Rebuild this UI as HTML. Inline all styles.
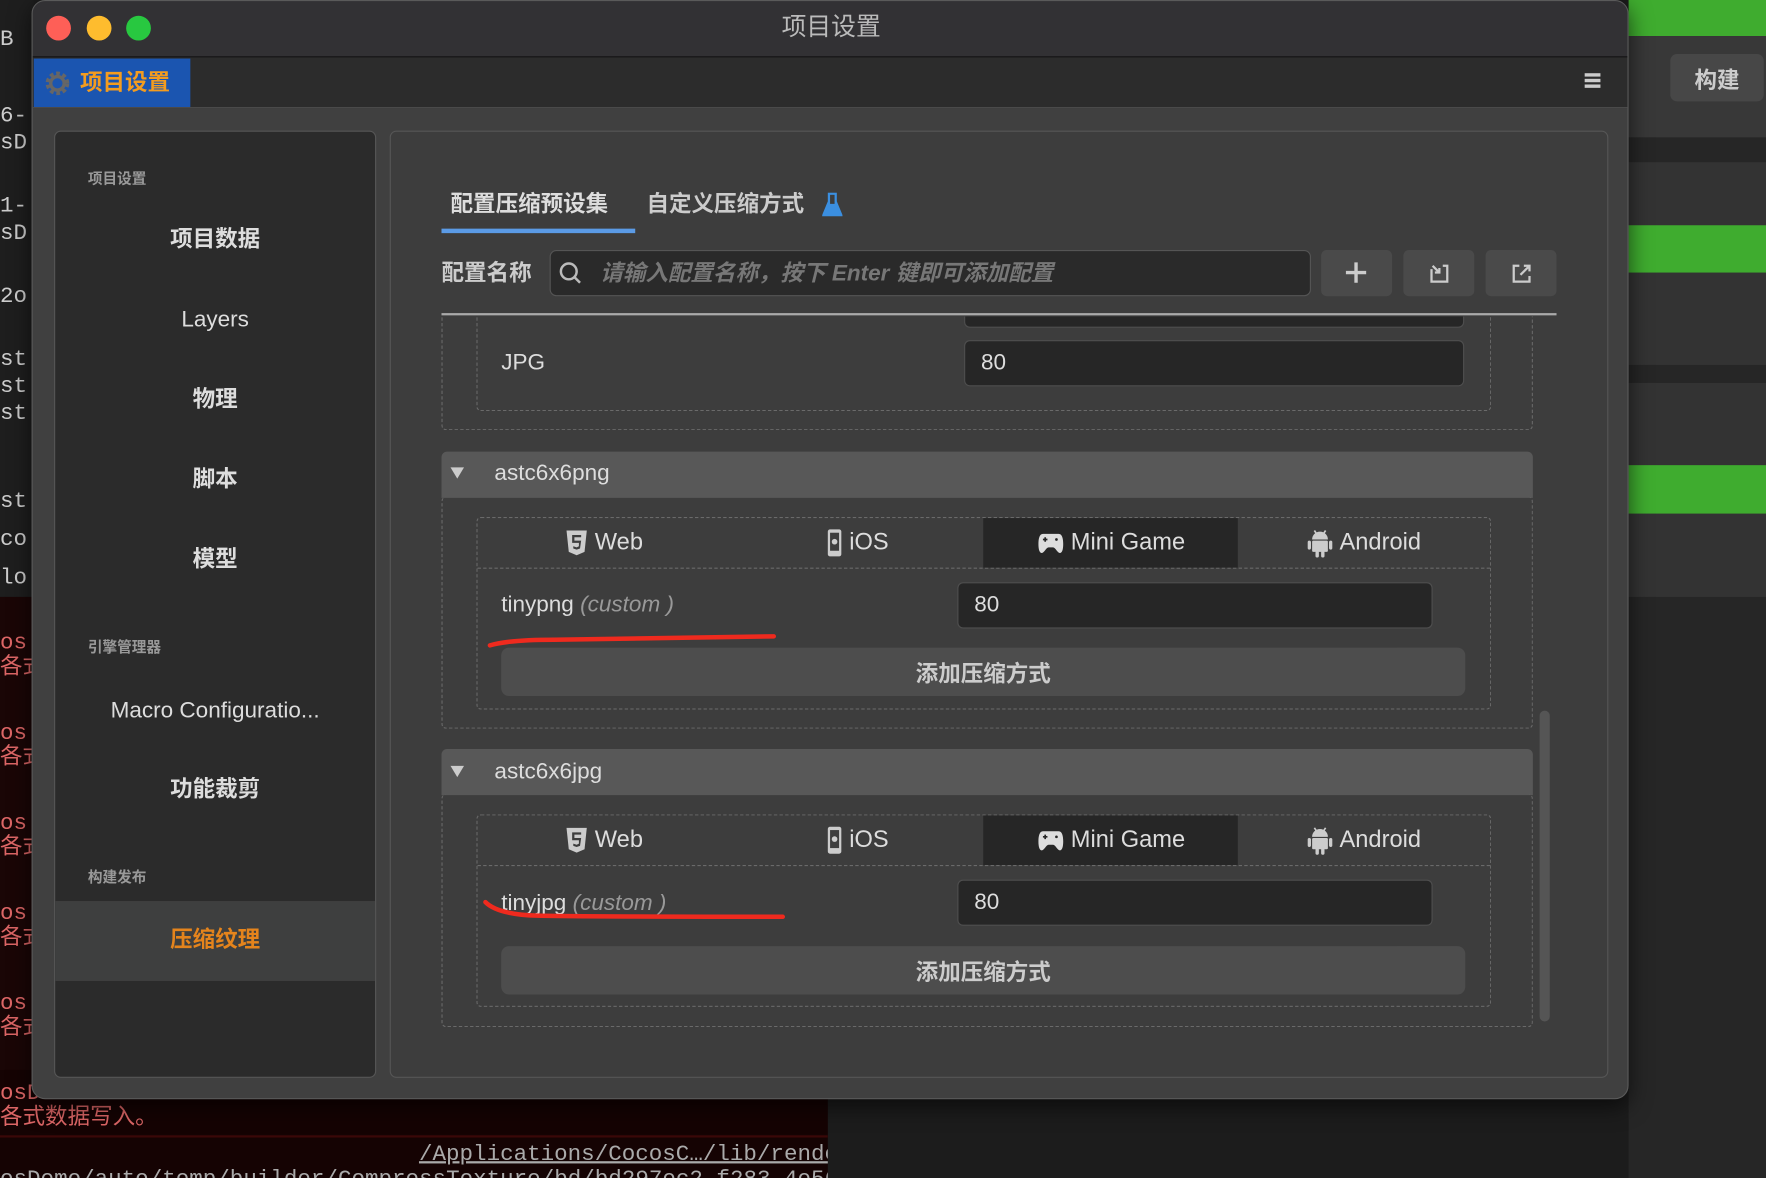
<!DOCTYPE html>
<html><head><meta charset="utf-8"><style>
*{box-sizing:border-box;margin:0;padding:0}
html,body{width:1766px;height:1178px;overflow:hidden;background:#1c1c1c}
#s{position:absolute;left:0;top:0;width:1568px;height:1046px;transform:scale(1.12628);transform-origin:0 0;font-family:"Liberation Sans","Noto Sans CJK SC",sans-serif;}
.a{position:absolute}
.t{position:absolute;white-space:nowrap;line-height:1}
.cn{font-weight:bold}
.term{font-family:"Liberation Mono","Noto Sans CJK SC",monospace;font-size:20px;color:#ccc}
.dash{position:absolute;border:1.5px dashed #6a6a6a;border-radius:4px}
.inp{position:absolute;background:#262626;border:1px solid #4e4e4e;border-radius:5px;color:#ddd;font-size:20px;padding-left:14px;display:flex;align-items:center}
.btn{position:absolute;background:#4d4d4d;border-radius:7px;color:#ccc;font-size:20px;font-weight:bold;display:flex;align-items:center;justify-content:center}
.tb{position:absolute;height:45px;display:flex;align-items:center;justify-content:center;font-size:21px;color:#ddd;gap:6px}
</style></head><body><div id="s">
<div class="a" style="left:0;top:0;width:30px;height:530px;background:#1e1e1e"></div>
<div class="a" style="left:0;top:530px;width:30px;height:440px;background:#1a0606"></div>
<div class="t term" style="left:0;top:26px">B</div>
<div class="t term" style="left:0;top:94px">6-</div><div class="t term" style="left:0;top:118px">sD</div>
<div class="t term" style="left:0;top:174px">1-</div><div class="t term" style="left:0;top:198px">sD</div>
<div class="t term" style="left:0;top:254px">2o</div>
<div class="t term" style="left:0;top:310px">st</div><div class="t term" style="left:0;top:334px">st</div><div class="t term" style="left:0;top:358px">st</div>
<div class="t term" style="left:0;top:436px">st</div><div class="t term" style="left:0;top:470px">co</div><div class="t term" style="left:0;top:504px">lo</div>
<div class="t term" style="left:0;top:562px;color:#d66">os</div><div class="t term" style="left:0;top:584px;color:#d66">各式</div>
<div class="t term" style="left:0;top:642px;color:#d66">os</div><div class="t term" style="left:0;top:664px;color:#d66">各式</div>
<div class="t term" style="left:0;top:722px;color:#d66">os</div><div class="t term" style="left:0;top:744px;color:#d66">各式</div>
<div class="t term" style="left:0;top:802px;color:#d66">os</div><div class="t term" style="left:0;top:824px;color:#d66">各式</div>
<div class="t term" style="left:0;top:882px;color:#d66">os</div><div class="t term" style="left:0;top:904px;color:#d66">各式</div>
<div class="a" style="left:0;top:950px;width:735px;height:96px;background:#150303;overflow:hidden">
<div class="t term" style="left:0;top:12px;color:#d66">osD</div>
<div class="t term" style="left:0;top:34px;color:#d66">各式数据写入。</div>
<div class="a" style="left:0;top:58px;width:735px;height:2px;background:#3a0808"></div>
<div class="t term" style="left:372px;top:66px;color:#aaa;text-decoration:underline">/Applications/CocosC…/lib/rende</div>
<div class="t term" style="left:0;top:88px;color:#aaa">osDemo/auto/temp/builder/CompressTexture/bd/bd297ec2-f283-4e56</div>
</div>
<div class="a" style="left:1446px;top:0;width:122px;height:1046px;background:#262626"></div>
<div class="a" style="left:1446px;top:0;width:122px;height:32px;background:#3fac2f"></div>
<div class="a" style="left:1446px;top:32px;width:122px;height:90px;background:#383838"></div>
<div class="a" style="left:1483px;top:48px;width:83px;height:42px;background:#474747;border-radius:6px;color:#ccc;font-size:20px;font-weight:bold;display:flex;align-items:center;justify-content:center">构建</div>
<div class="a" style="left:1446px;top:122px;width:122px;height:22px;background:#262626"></div>
<div class="a" style="left:1446px;top:144px;width:122px;height:180px;background:#333"></div>
<div class="a" style="left:1446px;top:200px;width:122px;height:42px;background:#3fac2f"></div>
<div class="a" style="left:1446px;top:340px;width:122px;height:190px;background:#333"></div>
<div class="a" style="left:1446px;top:413px;width:122px;height:43px;background:#3fac2f"></div>
<div class="a" style="left:28px;top:0;width:1418px;height:976px;background:#404040;border-radius:12px;border:1px solid #5a5a5a;overflow:hidden;box-shadow:0 6px 20px rgba(0,0,0,.6)">
 <div class="a" style="left:0;top:0;width:1418px;height:50px;background:#323134;border-bottom:1px solid #111"></div>
 <div class="a" style="left:12px;top:13px;width:22px;height:22px;border-radius:50%;background:#fe5f57"></div>
 <div class="a" style="left:48px;top:13px;width:22px;height:22px;border-radius:50%;background:#febc2e"></div>
 <div class="a" style="left:83px;top:13px;width:22px;height:22px;border-radius:50%;background:#28c840"></div>
 <div class="t" style="left:0;width:1418px;text-align:center;top:12px;font-size:22px;color:#bbb">项目设置</div>
 <div class="a" style="left:0;top:50px;width:1418px;height:45px;background:#2c2c2c;border-bottom:1px solid #4a4a4a"></div>
 <div class="a" style="left:1px;top:51px;width:139px;height:43px;background:#1b55b0"></div>
 <svg class="a" style="left:10px;top:61px" width="24" height="24" viewBox="0 0 24 24"><circle cx="12" cy="12" r="8" fill="none" stroke="#666" stroke-width="5" stroke-dasharray="3 2.2"/><circle cx="12" cy="12" r="6" fill="none" stroke="#666" stroke-width="3"/></svg>
 <div class="t cn" style="left:42px;top:63px;font-size:20px;color:#f39c1f">项目设置</div>
 <div class="a" style="left:1378px;top:64px;width:14px;height:3px;background:#ccc;box-shadow:0 5px 0 #ccc,0 10px 0 #ccc"></div>
 <div class="a" style="left:19px;top:115px;width:286px;height:841px;background:#2b2b2b;border:1.5px solid #565656;border-radius:6px;overflow:hidden">
  <div class="t cn" style="left:29px;top:35px;font-size:13px;color:#999">项目设置</div>
  <div class="t cn" style="left:0;width:284px;text-align:center;top:86px;font-size:20px;color:#ddd">项目数据</div>
  <div class="t" style="left:0;width:284px;text-align:center;top:157px;font-size:20px;color:#ddd">Layers</div>
  <div class="t cn" style="left:0;width:284px;text-align:center;top:228px;font-size:20px;color:#ddd">物理</div>
  <div class="t cn" style="left:0;width:284px;text-align:center;top:299px;font-size:20px;color:#ddd">脚本</div>
  <div class="t cn" style="left:0;width:284px;text-align:center;top:370px;font-size:20px;color:#ddd">模型</div>
  <div class="t cn" style="left:29px;top:451px;font-size:13px;color:#999">引擎管理器</div>
  <div class="t" style="left:0;width:284px;text-align:center;top:504px;font-size:20px;color:#ddd">Macro Configuratio...</div>
  <div class="t cn" style="left:0;width:284px;text-align:center;top:574px;font-size:20px;color:#ddd">功能裁剪</div>
  <div class="t cn" style="left:29px;top:655px;font-size:13px;color:#999">构建发布</div>
  <div class="a" style="left:0;top:683px;width:284px;height:71px;background:#3e3f3f"></div>
  <div class="t cn" style="left:0;width:284px;text-align:center;top:708px;font-size:20px;color:#e5841c">压缩纹理</div>
 </div>
 <div class="a" style="left:317px;top:115px;width:1082px;height:841px;background:#3d3d3d;border:1.5px solid #565656;border-radius:6px;overflow:hidden">
  <div class="t cn" style="left:53px;top:55px;font-size:20px;color:#ddd">配置压缩预设集</div>
  <div class="a" style="left:45px;top:86px;width:172px;height:4px;background:#5b9be6"></div>
  <div class="t cn" style="left:227px;top:55px;font-size:20px;color:#ccc">自定义压缩方式</div>
  <svg class="a" style="left:383px;top:54px" width="18" height="22" viewBox="0 0 18 22"><path d="M5 1h8M6 1v7L1 20h16L12 8V1" fill="#3b8fe0" stroke="#3b8fe0" stroke-width="2"/><rect x="7" y="2" width="4" height="8" fill="#3d3d3d"/></svg>
  <div class="t cn" style="left:45px;top:116px;font-size:20px;color:#ccc">配置名称</div>
  <div class="a" style="left:141px;top:105px;width:676px;height:41px;background:#2a2a2a;border:1px solid #555;border-radius:6px"></div>
  <svg class="a" style="left:148px;top:114px" width="24" height="24" viewBox="0 0 24 24"><circle cx="10" cy="10" r="7" fill="none" stroke="#bbb" stroke-width="2.2"/><path d="M15 15l5 5" stroke="#bbb" stroke-width="2.2"/></svg>
  <div class="t" style="left:186px;top:116px;font-size:20px;color:#777;font-style:italic;font-weight:bold">请输入配置名称，按下 Enter 键即可添加配置</div>
  <div class="a" style="left:826px;top:105px;width:63px;height:41px;background:#4a4a4a;border-radius:5px"></div>
  <svg class="a" style="left:846px;top:114px" width="22" height="22" viewBox="0 0 22 22"><path d="M11 2v18M2 11h18" stroke="#ccc" stroke-width="3"/></svg>
  <div class="a" style="left:899px;top:105px;width:63px;height:41px;background:#4a4a4a;border-radius:5px"></div>
  <svg class="a" style="left:920px;top:115px" width="22" height="22" viewBox="0 0 22 22"><path d="M4 7v11h14V4h-4M5 4l6 6M11 6v4H7" fill="none" stroke="#ccc" stroke-width="2"/></svg>
  <div class="a" style="left:972px;top:105px;width:63px;height:41px;background:#4a4a4a;border-radius:5px"></div>
  <svg class="a" style="left:993px;top:115px" width="22" height="22" viewBox="0 0 22 22"><path d="M9 4H4v14h14v-5M10 12l8-8M13 4h5v5" fill="none" stroke="#ccc" stroke-width="2"/></svg>
  <div class="a" style="left:45px;top:161px;width:990px;height:2px;background:#aaa"></div>
  <div class="a" style="left:0;top:164px;width:1082px;height:677px;overflow:hidden">
   <div class="dash" style="left:45px;top:-30px;width:969px;height:131px"></div>
   <div class="dash" style="left:76px;top:-30px;width:901px;height:114px"></div>
   <div class="inp" style="left:509px;top:-10px;width:444px;height:20px"></div>
   <div class="t" style="left:98px;top:31px;font-size:20px;color:#ddd">JPG</div>
   <div class="inp" style="left:509px;top:21px;width:444px;height:41px">80</div>
   <div class="a" style="left:45px;top:120px;width:969px;height:41px;background:#585858;border-radius:5px 5px 0 0"></div>
   <svg class="a" style="left:52px;top:133px" width="14" height="12" viewBox="0 0 14 12"><path d="M1 1h12L7 11z" fill="#ccc"/></svg>
   <div class="t" style="left:92px;top:129px;font-size:20px;color:#ddd">astc6x6png</div>
   <div class="dash" style="left:45px;top:160px;width:969px;height:206px;border-top:none"></div>
   <div class="dash" style="left:76px;top:178px;width:901px;height:171px"></div>
   <div class="a" style="left:77px;top:223px;width:899px;border-top:1.5px dashed #6a6a6a"></div>
   <div class="a" style="left:526px;top:179px;width:226px;height:44px;background:#262626"></div>
   <div class="tb" style="left:77px;top:178px;width:225px">G_WEB Web</div>
   <div class="tb" style="left:302px;top:178px;width:225px">G_IOS iOS</div>
   <div class="tb" style="left:527px;top:178px;width:225px">G_MG Mini Game</div>
   <div class="tb" style="left:752px;top:178px;width:225px">G_AND Android</div>
   <div class="t" style="left:98px;top:246px;font-size:20px;color:#ddd">tinypng <i style="color:#999">(custom )</i></div>
   <div class="inp" style="left:503px;top:236px;width:422px;height:41px">80</div>
   <svg class="a" style="left:85px;top:280px" width="260" height="16" viewBox="0 0 260 16"><path d="M3 12Q20 7 60 7L255 4" fill="none" stroke="#ef2a1e" stroke-width="4" stroke-linecap="round"/></svg>
   <div class="btn" style="left:98px;top:294px;width:856px;height:43px">添加压缩方式</div>
   <div class="a" style="left:45px;top:384px;width:969px;height:41px;background:#585858;border-radius:5px 5px 0 0"></div>
   <svg class="a" style="left:52px;top:398px" width="14" height="12" viewBox="0 0 14 12"><path d="M1 1h12L7 11z" fill="#ccc"/></svg>
   <div class="t" style="left:92px;top:394px;font-size:20px;color:#ddd">astc6x6jpg</div>
   <div class="dash" style="left:45px;top:424px;width:969px;height:207px;border-top:none"></div>
   <div class="dash" style="left:76px;top:442px;width:901px;height:171px"></div>
   <div class="a" style="left:77px;top:487px;width:899px;border-top:1.5px dashed #6a6a6a"></div>
   <div class="a" style="left:526px;top:443px;width:226px;height:44px;background:#262626"></div>
   <div class="tb" style="left:77px;top:442px;width:225px">G_WEB Web</div>
   <div class="tb" style="left:302px;top:442px;width:225px">G_IOS iOS</div>
   <div class="tb" style="left:527px;top:442px;width:225px">G_MG Mini Game</div>
   <div class="tb" style="left:752px;top:442px;width:225px">G_AND Android</div>
   <div class="t" style="left:98px;top:511px;font-size:20px;color:#ddd">tinyjpg <i style="color:#999">(custom )</i></div>
   <div class="inp" style="left:503px;top:500px;width:422px;height:41px">80</div>
   <svg class="a" style="left:80px;top:515px" width="275" height="30" viewBox="0 0 275 30"><path d="M4 5Q15 16 50 17Q100 18 268 18" fill="none" stroke="#ef2a1e" stroke-width="4" stroke-linecap="round"/></svg>
   <div class="btn" style="left:98px;top:559px;width:856px;height:43px">添加压缩方式</div>
   <div class="a" style="left:1020px;top:350px;width:9px;height:276px;background:#555;border-radius:5px"></div>
  </div>
 </div>
</div>
</div>
<script>
var I={
G_WEB:'<svg width="20" height="24" viewBox="0 0 20 24"><path d="M1 1h18l-2 19-7 3-7-3z" fill="#ccc"/><path d="M6 5h8v2H8v3h6l-1 7-3 1-3-1v-2l3 1 2-1v-3H6z" fill="#3d3d3d"/></svg>',
G_IOS:'<svg width="14" height="26" viewBox="0 0 14 26"><rect x="1" y="1" width="12" height="24" rx="2" fill="#ccc"/><rect x="3" y="4" width="8" height="16" fill="#3d3d3d"/><circle cx="7" cy="12" r="2.5" fill="#ccc"/></svg>',
G_MG:'<svg width="24" height="20" viewBox="0 0 24 20"><path d="M5 2h14c3 0 4 4 4 9s-1 8-3 8-4-5-6-5h-4c-2 0-4 5-6 5S1 16 1 11 2 2 5 2z" fill="#ddd"/><path d="M5 7h4M7 5v4" stroke="#262626" stroke-width="1.5"/><circle cx="17" cy="7" r="1.2" fill="#262626"/></svg>',
G_AND:'<svg width="22" height="26" viewBox="0 0 22 26"><path d="M4 10a7 7 0 0 1 14 0z" fill="#ccc"/><path d="M6 2l2 3M16 2l-2 3" stroke="#ccc" stroke-width="1.5"/><rect x="4" y="11" width="14" height="10" rx="1" fill="#ccc"/><rect x="0" y="11" width="3" height="8" rx="1.5" fill="#ccc"/><rect x="19" y="11" width="3" height="8" rx="1.5" fill="#ccc"/><rect x="7" y="20" width="3" height="6" rx="1.5" fill="#ccc"/><rect x="12" y="20" width="3" height="6" rx="1.5" fill="#ccc"/></svg>'};
document.querySelectorAll('.tb').forEach(function(e){var p=e.textContent.split(' ');var k=p.shift();e.innerHTML=I[k]+'<span>'+p.join(' ')+'</span>';});
</script>
</body></html>
